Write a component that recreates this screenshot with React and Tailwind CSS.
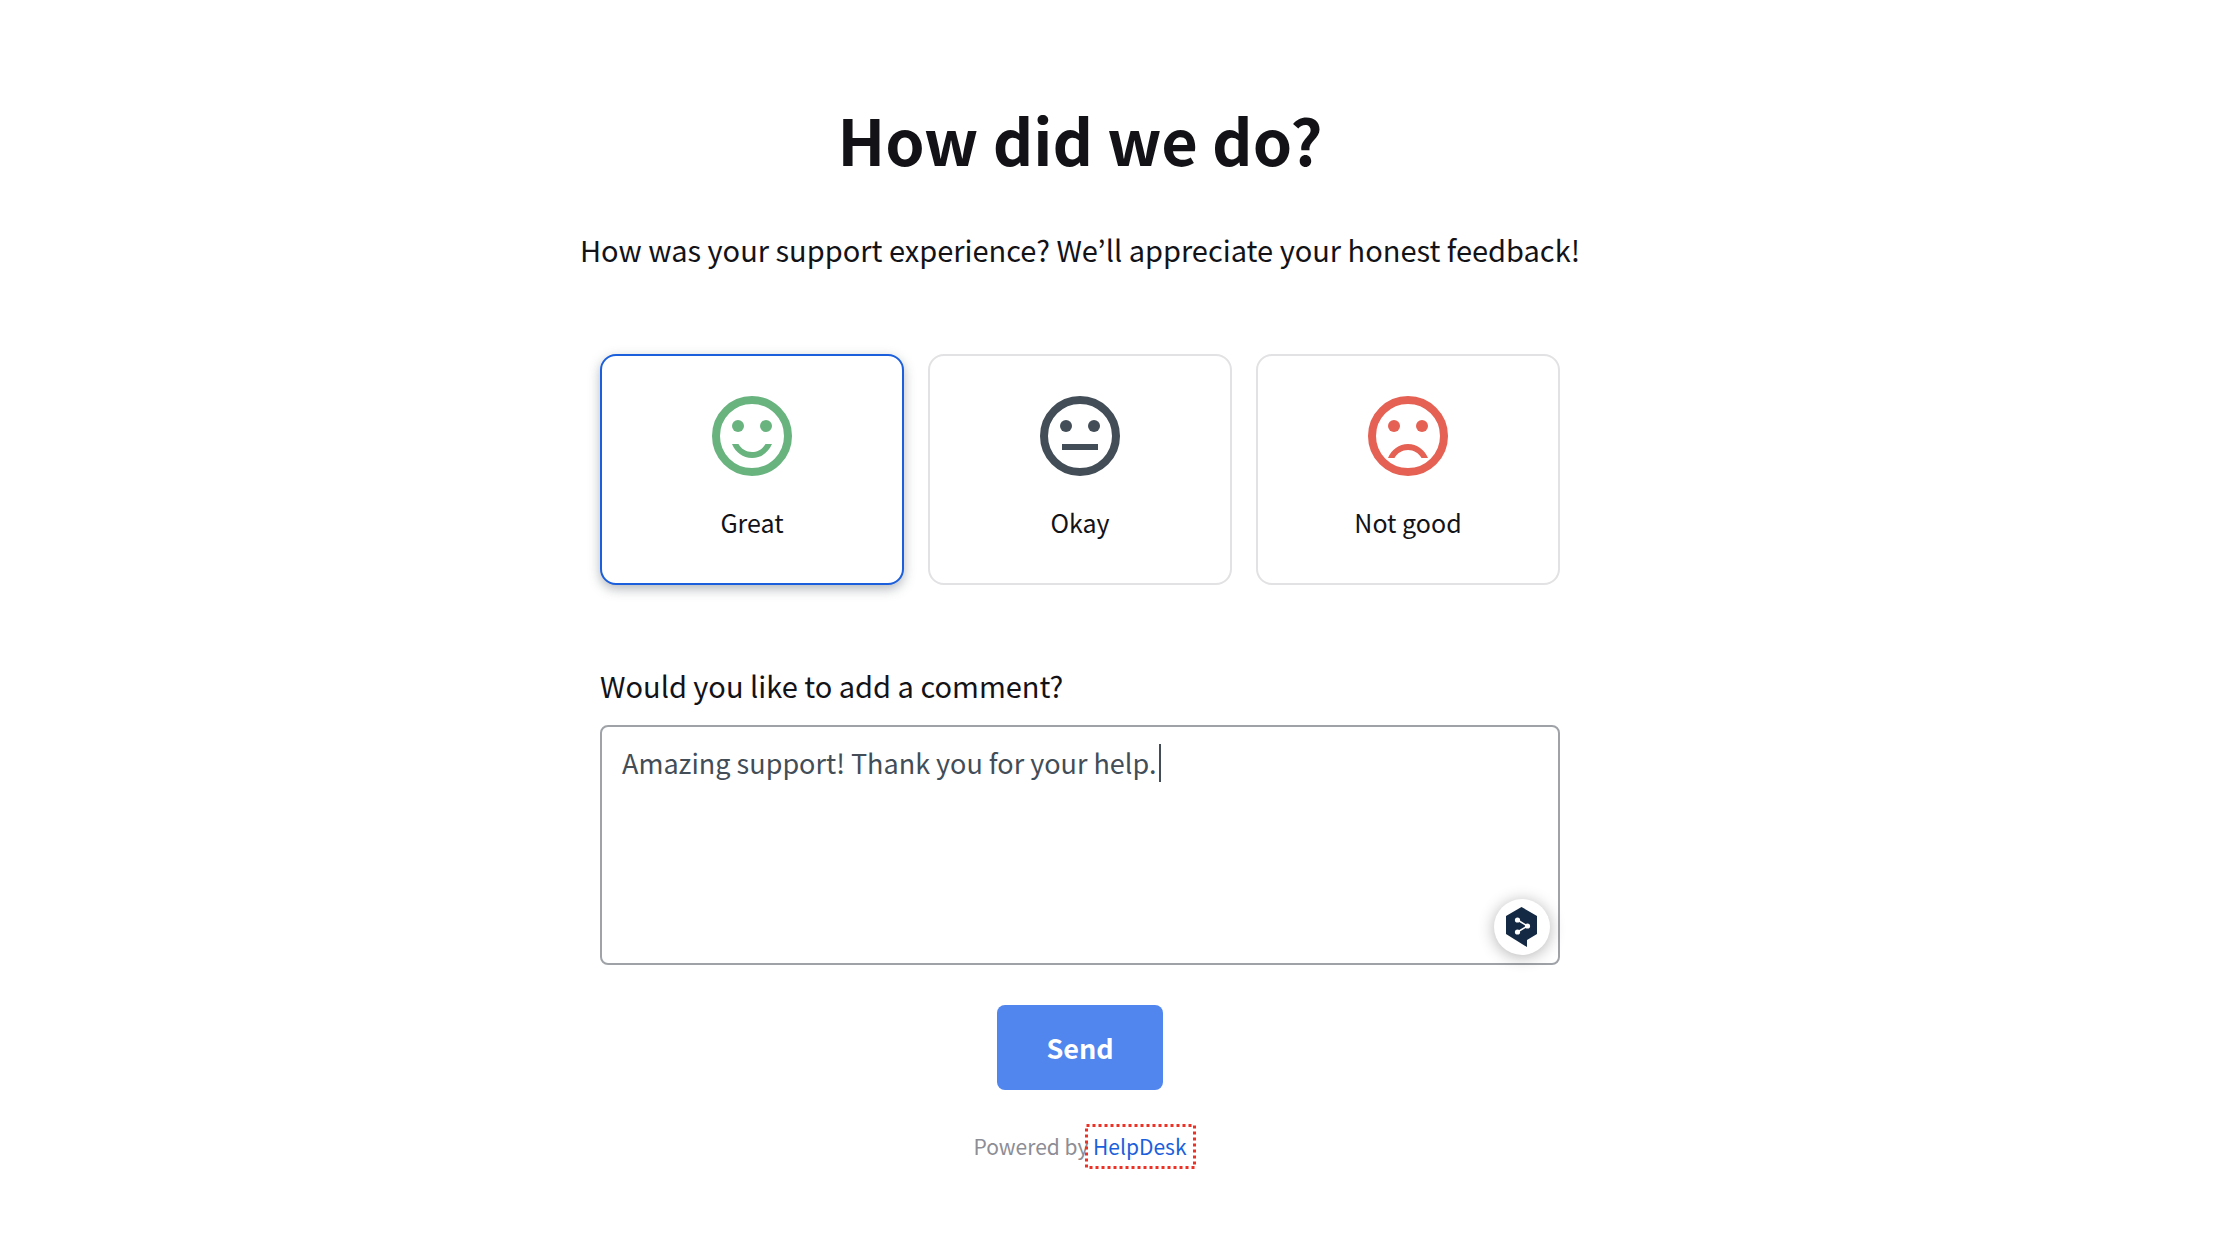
import { useState } from "react";

const RATINGS = [
  { id: "great", label: "Great", color: "text-[#69b37f]", mouth: "smile" },
  { id: "okay", label: "Okay", color: "text-[#424d57]", mouth: "flat" },
  { id: "bad", label: "Not good", color: "text-[#e46153]", mouth: "frown" },
];

function Face({ mouth }) {
  return (
    <svg viewBox="0 0 80 80" className="size-20" fill="currentColor" aria-hidden="true">
      <circle cx="40" cy="40" r="36" fill="none" stroke="currentColor" strokeWidth="8" />
      <circle cx="26" cy="30" r="6" />
      <circle cx="54" cy="30" r="6" />
      {mouth === "smile" && <path d="M20 48 C23.4 56.2 31 62 40 62 C49 62 56.6 56.2 60 48 H53.5 C50.8 52.8 45.8 56 40 56 C34.2 56 29.2 52.8 26.5 48 Z" />}
      {mouth === "flat" && <rect x="22" y="48" width="36" height="6" />}
      {mouth === "frown" && <path d="M20 62 C23.4 53.8 31 48 40 48 C49 48 56.6 53.8 60 62 H53.5 C50.8 57.2 45.8 54 40 54 C34.2 54 29.2 57.2 26.5 62 Z" />}
    </svg>
  );
}

function RatingCard({ rating, checked, onSelect }) {
  return (
    <label
      className={
        "flex flex-1 cursor-pointer flex-col items-center gap-6 rounded-2xl border-2 bg-white pt-10 pb-[38px] " +
        (checked ? "border-[#1b5fdc] shadow-[0_4px_12px_rgba(66,77,87,0.4)]" : "border-[#e2e2e4]")
      }
    >
      <input
        type="radio"
        name="rating"
        value={rating.id}
        checked={checked}
        onChange={() => onSelect(rating.id)}
        className="sr-only"
      />
      <span className={rating.color}>
        <Face mouth={rating.mouth} />
      </span>
      <span className="text-[25px] leading-[45px]">{rating.label}</span>
    </label>
  );
}

export default function App() {
  const [rating, setRating] = useState("great");
  const [comment, setComment] = useState("Amazing support! Thank you for your help. ");

  return (
    <main className="flex min-h-screen flex-col items-center bg-white pt-[91px] pr-16 font-['Noto_Sans_CJK_KR','Noto_Sans',sans-serif] text-[#131317]">
      <h1 className="text-[63px] leading-[96px] font-semibold">How did we do?</h1>
      <p className="mt-[38px] text-[29px] leading-[48px]">
        How was your support experience? We’ll appreciate your honest feedback!
      </p>

      <form className="mt-[81px] flex w-full max-w-[960px] flex-col items-center" onSubmit={(e) => e.preventDefault()}>
        <fieldset aria-label="Rating" className="flex w-full gap-6">
          {RATINGS.map((r) => (
            <RatingCard key={r.id} rating={r} checked={r.id === rating} onSelect={setRating} />
          ))}
        </fieldset>

        <label htmlFor="comment" className="mt-[76px] w-full text-[29px] leading-[48px]">
          Would you like to add a comment?
        </label>
        <div className="relative mt-4 w-full">
          <textarea
            id="comment"
            value={comment}
            onChange={(e) => setComment(e.target.value)}
            className="block h-60 w-full resize-none rounded-lg border-2 border-[#9fa3a8] px-5 py-4 text-[27px] leading-[40px] text-[#424d57] outline-none"
          />
          <span className="absolute top-[19px] left-[559px] h-[38px] w-0.5 bg-[#424d57]" />
          <button
            type="button"
            aria-label="Writing assistant"
            className="absolute right-2.5 bottom-2.5 flex size-14 items-center justify-center rounded-full bg-white shadow-[0_2px_16px_rgba(0,0,0,0.3)]"
          >
            <svg viewBox="0 0 32 40" className="h-10 w-8" aria-hidden="true">
              <path d="M15.5 0 L31 9 V27 L21 33 V40 L0 27 V9 Z" fill="#142943" />
              <path d="M11.5 13 L21.5 19 L11.5 25" fill="none" stroke="#fff" strokeWidth="1.5" />
              <circle cx="11.5" cy="13" r="2.6" fill="#fff" />
              <circle cx="21.5" cy="19" r="2.6" fill="#fff" />
              <circle cx="11.5" cy="25" r="2.6" fill="#fff" />
            </svg>
          </button>
        </div>

        <button
          type="submit"
          className="mt-10 rounded-lg bg-[#5086ee] px-[49px] py-5 text-[27px] leading-[45px] font-semibold text-white"
        >
          Send
        </button>
      </form>

      <p className="mt-9 text-[21px] leading-[40px] text-[#8d8d95]">
        Powered by{" "}
        <a href="#helpdesk" className="relative inline-block text-[#1b5fdc]">
          HelpDesk
          <svg className="absolute -top-1 -left-2 h-12 w-28" aria-hidden="true">
            <rect x="1.5" y="3.5" width="108" height="42" fill="none" stroke="#ee3124" strokeWidth="3" strokeDasharray="3 3" />
          </svg>
        </a>
      </p>
    </main>
  );
}
